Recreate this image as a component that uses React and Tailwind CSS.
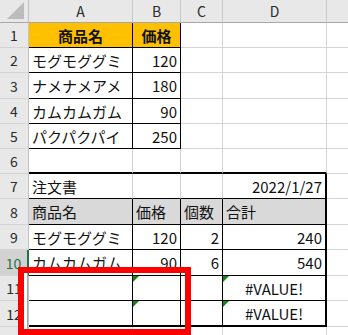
import React from "react";

// Sheet layout: row-header column, columns A–D, and a sliver of E.
const FONT = "font-['Noto_Sans_CJK_JP','Noto_Sans',sans-serif]";

const GRID = "border-r border-b border-[#d4d4d4]";
const BLACK = "border-r border-b border-black";
const BLACK_R2 = "border-r-2 border-b border-black";
const BLACK_B2 = "border-r border-b-2 border-black";
const BLACK_RB2 = "border-r-2 border-b-2 border-black";
const TOP_EDGE = "border-r border-b-2 border-r-[#d4d4d4] border-b-black";
const TITLE_ROW = "border-r border-b border-r-[#d4d4d4] border-b-black";
const LAST_COL = "border-b border-[#d4d4d4]";

const ROW_HEAD =
  "justify-center border-r border-b border-r-[#c3c3c3] border-b-[#d4d4d4] bg-[#e8e8e8] text-[14px] text-[#2b2b2b]";
const ROW_HEAD_ACTIVE =
  "justify-center border-r-2 border-b border-r-[#217346] border-b-[#d4d4d4] bg-[#d2d2d2] text-[14px] text-[#217346]";
const COL_HEAD =
  "justify-center border-r border-b border-r-[#c9c9c9] border-b-[#a8a8a8] bg-[#e8e8e8] text-[14px] text-[#2b2b2b]";

function Cell({ b, align = "left", fill = "", bold = false, flag = false, children }) {
  const a =
    align === "right" ? "justify-end pr-[3px]" : align === "center" ? "justify-center" : "justify-start pl-[3px]";
  return (
    <div
      className={`relative flex items-center overflow-hidden whitespace-nowrap text-[15px] leading-none text-[#111] ${a} ${b} ${fill} ${
        bold ? "font-bold" : "font-normal"
      }`}
    >
      {flag && (
        <span className="absolute left-0 top-0 h-0 w-0 border-t-[6px] border-r-[6px] border-t-[#14851a] border-r-transparent" />
      )}
      {children}
    </div>
  );
}

function Head({ active = false, children }) {
  return (
    <div className={`flex items-center leading-none ${active ? ROW_HEAD_ACTIVE : ROW_HEAD}`}>{children}</div>
  );
}

function ColHead({ children }) {
  return <div className={`flex items-center leading-none ${COL_HEAD}`}>{children}</div>;
}

export default function App() {
  return (
    <div className={`relative h-[335px] w-[348px] overflow-hidden bg-white ${FONT}`}>
      <div className="grid w-[348px] grid-cols-[29px_104px_48px_42px_104px_21px] grid-rows-[23px_25px_25px_26px_25px_25px_25px_25px_26px_25px_26px_25px_26px_25px]">
        {/* column headers */}
        <div className="flex items-end justify-end border-r border-b border-r-[#c3c3c3] border-b-[#a8a8a8] bg-[#e8e8e8] pr-[4px] pb-[3px]">
          <svg width="17" height="17" viewBox="0 0 17 17">
            <polygon points="0,17 17,17 17,0" fill="#bcbcbc" />
          </svg>
        </div>
        <ColHead>A</ColHead>
        <ColHead>B</ColHead>
        <ColHead>C</ColHead>
        <ColHead>D</ColHead>
        <div className="border-b border-b-[#a8a8a8] bg-[#e8e8e8]" />

        {/* 1 */}
        <Head>1</Head>
        <Cell b={BLACK} fill="bg-[#ffc000]" align="center" bold>商品名</Cell>
        <Cell b={BLACK} fill="bg-[#ffc000]" align="center" bold>価格</Cell>
        <Cell b={GRID} />
        <Cell b={GRID} />
        <Cell b={LAST_COL} />

        {/* 2 */}
        <Head>2</Head>
        <Cell b={BLACK}>モグモググミ</Cell>
        <Cell b={BLACK} align="right">120</Cell>
        <Cell b={GRID} />
        <Cell b={GRID} />
        <Cell b={LAST_COL} />

        {/* 3 */}
        <Head>3</Head>
        <Cell b={BLACK}>ナメナメアメ</Cell>
        <Cell b={BLACK} align="right">180</Cell>
        <Cell b={GRID} />
        <Cell b={GRID} />
        <Cell b={LAST_COL} />

        {/* 4 */}
        <Head>4</Head>
        <Cell b={BLACK}>カムカムガム</Cell>
        <Cell b={BLACK} align="right">90</Cell>
        <Cell b={GRID} />
        <Cell b={GRID} />
        <Cell b={LAST_COL} />

        {/* 5 */}
        <Head>5</Head>
        <Cell b={BLACK}>パクパクパイ</Cell>
        <Cell b={BLACK} align="right">250</Cell>
        <Cell b={GRID} />
        <Cell b={GRID} />
        <Cell b={LAST_COL} />

        {/* 6 */}
        <Head>6</Head>
        <Cell b={TOP_EDGE} />
        <Cell b={TOP_EDGE} />
        <Cell b={TOP_EDGE} />
        <Cell b={TOP_EDGE} />
        <Cell b={LAST_COL} />

        {/* 7 */}
        <Head>7</Head>
        <Cell b={TITLE_ROW}>注文書</Cell>
        <Cell b={TITLE_ROW} />
        <Cell b={TITLE_ROW} />
        <Cell b={BLACK_R2} align="right">2022/1/27</Cell>
        <Cell b={LAST_COL} />

        {/* 8 */}
        <Head>8</Head>
        <Cell b={BLACK} fill="bg-[#d9d9d9]">商品名</Cell>
        <Cell b={BLACK} fill="bg-[#d9d9d9]">価格</Cell>
        <Cell b={BLACK} fill="bg-[#d9d9d9]">個数</Cell>
        <Cell b={BLACK_R2} fill="bg-[#d9d9d9]">合計</Cell>
        <Cell b={LAST_COL} />

        {/* 9 */}
        <Head>9</Head>
        <Cell b={BLACK}>モグモググミ</Cell>
        <Cell b={BLACK} align="right">120</Cell>
        <Cell b={BLACK} align="right">2</Cell>
        <Cell b={BLACK_R2} align="right">240</Cell>
        <Cell b={LAST_COL} />

        {/* 10 */}
        <Head active>10</Head>
        <Cell b={BLACK}>カムカムガム</Cell>
        <Cell b={BLACK} align="right">90</Cell>
        <Cell b={BLACK} align="right">6</Cell>
        <Cell b={BLACK_R2} align="right">540</Cell>
        <Cell b={LAST_COL} />

        {/* 11 */}
        <Head>11</Head>
        <Cell b={BLACK} />
        <Cell b={BLACK} flag />
        <Cell b={BLACK} />
        <Cell b={BLACK_R2} align="center" flag>#VALUE!</Cell>
        <Cell b={LAST_COL} />

        {/* 12 */}
        <Head>12</Head>
        <Cell b={BLACK_B2} />
        <Cell b={BLACK_B2} flag />
        <Cell b={BLACK_B2} />
        <Cell b={BLACK_RB2} align="center" flag>#VALUE!</Cell>
        <Cell b={LAST_COL} />

        {/* 13 */}
        <Head>13</Head>
        <Cell b={GRID} />
        <Cell b={GRID} />
        <Cell b={GRID} />
        <Cell b={GRID} />
        <Cell b={LAST_COL} />
      </div>

      {/* red highlight frame drawn over the sheet */}
      <div className="absolute left-[18px] top-[267px] h-[68px] w-[173px] border-[6px] border-[#ff0000]">
        <div className="absolute left-0 top-0 h-full w-[3px] bg-white" />
        <div className="absolute left-[3px] top-0 h-full w-px bg-[#a6a6a6]" />
      </div>
    </div>
  );
}
